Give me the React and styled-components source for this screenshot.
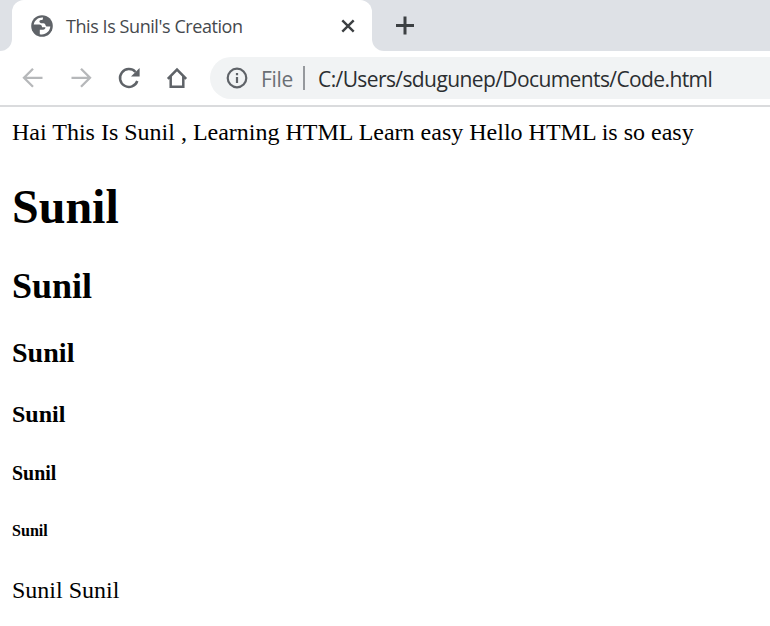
import React from "react";
import styled, { createGlobalStyle } from "styled-components";

const Global = createGlobalStyle`
  * { box-sizing: border-box; }
  body { margin: 0; background: #fff; overflow: hidden; }
`;
const Browser = styled.div`
  width: 770px;
  height: 626px;
  overflow: hidden;
  background: #fff;
`;
const TabStrip = styled.div`
  display: flex;
  height: 51px;
  background: #fff;
`;
const StripEdge = styled.div`
  width: 12px;
  background: #dee1e6;
  border-bottom-right-radius: 12px;
`;
const TabBackdrop = styled.div`
  width: 360px;
  background: linear-gradient(#dee1e6 24px, #fff 24px);
`;
const Tab = styled.div`
  height: 51px;
  display: flex;
  align-items: center;
  padding: 0 16px 0 18px;
  background: #fff;
  border-radius: 12px 12px 0 0;
`;
const TabTitle = styled.span`
  flex: 1;
  margin-left: 12px;
  font: 18px/24px "Open Sans", sans-serif;
  letter-spacing: ${(p) => p.$tracking};
  color: #45494d;
  white-space: nowrap;
`;
const StripRest = styled.div`
  flex: 1;
  padding: 15px 0 0 22px;
  background: #dee1e6;
  border-bottom-left-radius: 12px;
`;
const Icon = styled.svg`
  display: block;
  flex: none;
  overflow: visible;
  fill: none;
  stroke: ${(p) => p.$color || "#5f6368"};
  stroke-width: ${(p) => p.$weight || 2.2};
`;
const Toolbar = styled.div`
  display: flex;
  align-items: center;
  height: 56px;
  padding-left: 22px;
  border-bottom: 2px solid #dadbdd;
`;
const NavButtons = styled.div`
  display: flex;
  gap: 26px;
  width: 188px;
`;
const AddressBar = styled.div`
  flex: 1;
  display: flex;
  align-items: center;
  height: 42px;
  padding-left: 16px;
  background: #f1f3f4;
  border-radius: 21px 0 0 21px;
`;
const AddressText = styled.span`
  padding-top: 1px;
  font: 21px/28px "Open Sans", sans-serif;
  letter-spacing: ${(p) => p.$tracking};
  color: ${(p) => p.$color};
  white-space: nowrap;
`;
const Scheme = styled(AddressText)`
  width: 42px;
  margin-left: 13px;
`;
const Divider = styled.div`
  width: 2px;
  height: 24px;
  margin-right: 13px;
  background: #96999d;
`;
const Page = styled.main`
  padding: 12px;
  font: 24px/27px "Liberation Serif", serif;
  color: #000;
`;
const Heading = styled.h1`
  margin: ${(p) => p.$gap}px 0 0;
  font-size: ${(p) => p.$size}px;
  line-height: ${(p) => p.$line}px;
  font-weight: bold;
`;
const Closing = styled.p`
  margin: 37px 0 0;
`;

const headings = [
  { as: "h1", size: 48, line: 55, gap: 33 },
  { as: "h2", size: 36, line: 41, gap: 32 },
  { as: "h3", size: 28.08, line: 31, gap: 30 },
  { as: "h4", size: 24, line: 27, gap: 33 },
  { as: "h5", size: 19.92, line: 23, gap: 34 },
  { as: "h6", size: 16.08, line: 18, gap: 37 },
];

export default function App() {
  return (
    <Browser>
      <Global />
      <TabStrip>
        <StripEdge />
        <TabBackdrop>
          <Tab>
            <Icon width="24" height="24" viewBox="0 0 24 24">
              <circle cx="12" cy="12" r="10.8" fill="#5f6368" stroke="none" />
              <path d="M13 3.600C8.600 3.200 4.700 6 3.700 10.600H9.200C11.200 10.600 12 11.500 12 13.200H15.400C15.400 15.200 14.300 15.800 11.400 15.800H9.800V20.200C15.200 21.400 20 17.600 20.300 12.600H17.200C16 12.600 15.700 11.900 15.400 10.800 15 9.500 14 9.300 12.400 9.300 10.400 9.300 9.400 8.700 9.400 7.500 9.400 6.300 10.500 6 12.200 6 12.700 6 13 4.900 13 3.600Z" fill="#fff" stroke="none" />
            </Icon>
            <TabTitle $tracking="-0.43px">This Is Sunil's Creation</TabTitle>
            <Icon width="16" height="16" viewBox="0 0 16 16" $color="#3c4043" $weight={2.4}>
              <path d="M2.300 2.300 13.700 13.700M13.700 2.300 2.300 13.700" />
            </Icon>
          </Tab>
        </TabBackdrop>
        <StripRest>
          <Icon width="22" height="22" viewBox="0 0 22 22" $color="#3c4043" $weight={3}>
            <path d="M2 10.500H20M11 1.500V19.500" />
          </Icon>
        </StripRest>
      </TabStrip>
      <Toolbar>
        <NavButtons>
          <Icon width="22" height="22" viewBox="0 0 22 22" $color="#b6b8ba" $weight={2.3}>
            <path d="M20.500 10.800H2.500M11 1.800 2 10.800 11 19.800" />
          </Icon>
          <Icon width="22" height="22" viewBox="0 0 22 22" $color="#b6b8ba" $weight={2.3}>
            <path d="M1.500 10.800H19.500M11 1.800 20 10.800 11 19.800" />
          </Icon>
          <Icon width="22" height="22" viewBox="0 0 22 22" $weight={2.5}>
            <path d="M19.300 14A8.900 8.900 0 1 1 17.500 5" />
            <path d="M21.600 1V9.600H13z" fill="#5f6368" stroke="none" />
          </Icon>
          <Icon width="22" height="22" viewBox="0 0 22 22" $weight={2.5}>
            <path d="M1.800 11.800 11 2.500 20.200 11.800M4.700 9.500V19.700H17.300V9.500" />
          </Icon>
        </NavButtons>
        <AddressBar>
          <Icon width="22" height="22" viewBox="0 0 22 22" $weight={2.2}>
            <circle cx="11" cy="11" r="9.300" />
            <path d="M11 10V16M11 6V8.200" />
          </Icon>
          <Scheme $color="#6b6f74" $tracking="-0.3px">File</Scheme>
          <Divider />
          <AddressText $color="#2b2e31" $tracking="-0.6px">
            C:/Users/sdugunep/Documents/Code.html
          </AddressText>
        </AddressBar>
      </Toolbar>
      <Page>
        Hai This Is Sunil , Learning HTML Learn easy Hello HTML is so easy
        {headings.map((h) => (
          <Heading key={h.as} as={h.as} $size={h.size} $line={h.line} $gap={h.gap}>
            Sunil
          </Heading>
        ))}
        <Closing>Sunil Sunil</Closing>
      </Page>
    </Browser>
  );
}
